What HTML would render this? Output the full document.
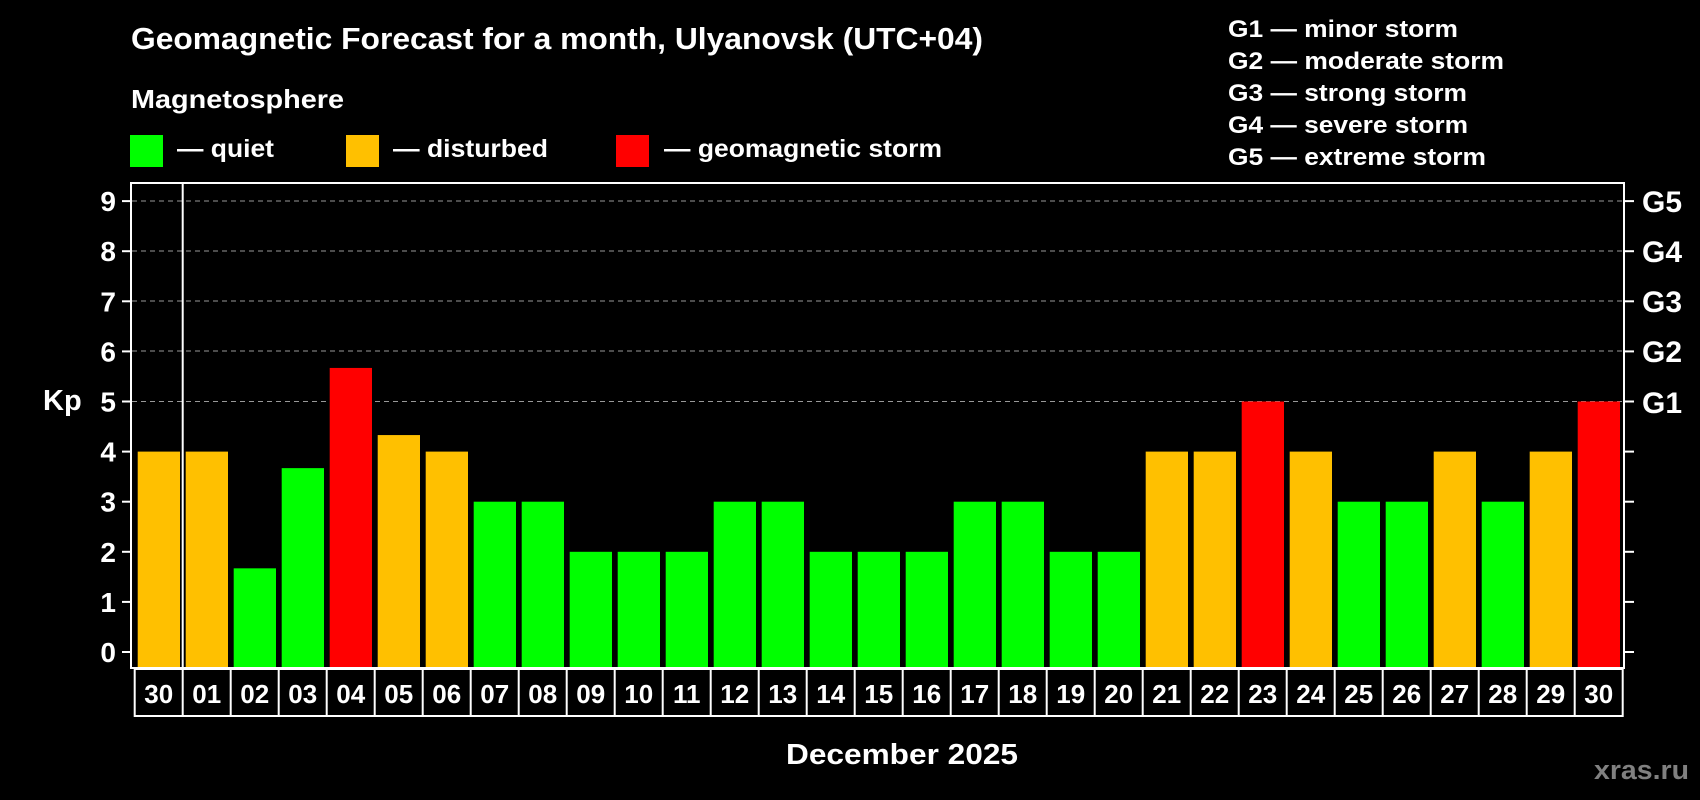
<!DOCTYPE html>
<html><head><meta charset="utf-8"><style>html,body{margin:0;padding:0;background:#000}svg{display:block}</style></head>
<body>
<svg width="1700" height="800" xmlns="http://www.w3.org/2000/svg" font-family="Liberation Sans, Arial, sans-serif" font-weight="bold" fill="#fff">
<rect width="1700" height="800" fill="#000"/>
<text x="131" y="49" font-size="31" textLength="852" lengthAdjust="spacingAndGlyphs">Geomagnetic Forecast for a month, Ulyanovsk (UTC+04)</text>
<text x="131" y="108" font-size="26" textLength="213" lengthAdjust="spacingAndGlyphs">Magnetosphere</text>
<rect x="130" y="135" width="33" height="32" fill="#00ff00"/>
<rect x="346" y="135" width="33" height="32" fill="#ffc000"/>
<rect x="616" y="135" width="33" height="32" fill="#ff0000"/>
<text x="177" y="157" font-size="25" textLength="97" lengthAdjust="spacingAndGlyphs">— quiet</text>
<text x="393" y="157" font-size="25" textLength="155" lengthAdjust="spacingAndGlyphs">— disturbed</text>
<text x="664" y="157" font-size="25" textLength="278" lengthAdjust="spacingAndGlyphs">— geomagnetic storm</text>
<g font-size="24">
<text x="1228" y="37" textLength="230" lengthAdjust="spacingAndGlyphs">G1 — minor storm</text>
<text x="1228" y="69" textLength="276" lengthAdjust="spacingAndGlyphs">G2 — moderate storm</text>
<text x="1228" y="101" textLength="239" lengthAdjust="spacingAndGlyphs">G3 — strong storm</text>
<text x="1228" y="133" textLength="240" lengthAdjust="spacingAndGlyphs">G4 — severe storm</text>
<text x="1228" y="165" textLength="258" lengthAdjust="spacingAndGlyphs">G5 — extreme storm</text>
</g>
<g id="grid" stroke="#999" stroke-width="1" stroke-dasharray="5,4">
<line x1="132" x2="1623" y1="201" y2="201"/><line x1="132" x2="1623" y1="251" y2="251"/><line x1="132" x2="1623" y1="301" y2="301"/><line x1="132" x2="1623" y1="351" y2="351"/><line x1="132" x2="1623" y1="401.5" y2="401.5"/>
</g>
<g id="bars"></g>
<rect x="131" y="183" width="1493" height="485" fill="none" stroke="#fff" stroke-width="2"/>
<line x1="182.7" x2="182.7" y1="183" y2="668" stroke="#fff" stroke-width="2"/>
<g id="ticks" stroke="#fff" stroke-width="2"></g>
<g id="ylab" font-size="28" text-anchor="end"></g>
<g font-size="30">
<text x="1642" y="212">G5</text><text x="1642" y="262">G4</text><text x="1642" y="312">G3</text><text x="1642" y="362">G2</text><text x="1642" y="413">G1</text>
</g>
<text x="43" y="410" font-size="29">Kp</text>
<g id="days" font-size="26" text-anchor="middle"></g>
<rect x="134.7" y="669" width="1488" height="47" fill="none" stroke="#fff" stroke-width="2"/>
<g id="seps" stroke="#fff" stroke-width="2"></g>
<text x="786" y="764" font-size="29" textLength="232" lengthAdjust="spacingAndGlyphs">December 2025</text>
<text x="1594" y="779" font-size="27" fill="#808080" textLength="95" lengthAdjust="spacingAndGlyphs">xras.ru</text>
</svg>
<script>
var ns="http://www.w3.org/2000/svg";
function el(p,t,a,txt){var e=document.createElementNS(ns,t);for(var k in a)e.setAttribute(k,a[k]);if(txt!=null)e.textContent=txt;document.getElementById(p).appendChild(e);}
var v=[4,4,1.67,3.67,5.67,4.33,4,3,3,2,2,2,3,3,2,2,2,3,3,2,2,4,4,5,4,3,3,4,3,4,5];
var d=["30","01","02","03","04","05","06","07","08","09","10","11","12","13","14","15","16","17","18","19","20","21","22","23","24","25","26","27","28","29","30"];
var col={o:"#ffc000",g:"#00ff00",r:"#ff0000"};
var cs=["o","o","g","g","r","o","o","g","g","g","g","g","g","g","g","g","g","g","g","g","g","o","o","r","o","g","g","o","g","o","r"];
var u=50.1,z=652;
for(var i=0;i<31;i++){var x=137.7+i*48;var t=z-v[i]*u;
el("bars","rect",{x:x,y:t,width:42.3,height:668-t,fill:col[cs[i]]});
el("days","text",{x:158.7+i*48,y:703},d[i]);
if(i>0)el("seps","line",{x1:134.7+i*48,x2:134.7+i*48,y1:669,y2:716});}
for(var k=0;k<=9;k++){var y=z-k*u;
el("ticks","line",{x1:122,x2:131,y1:y,y2:y});el("ticks","line",{x1:1624,x2:1634,y1:y,y2:y});
el("ylab","text",{x:116,y:y+10},String(k));}
</script>
</body></html>
